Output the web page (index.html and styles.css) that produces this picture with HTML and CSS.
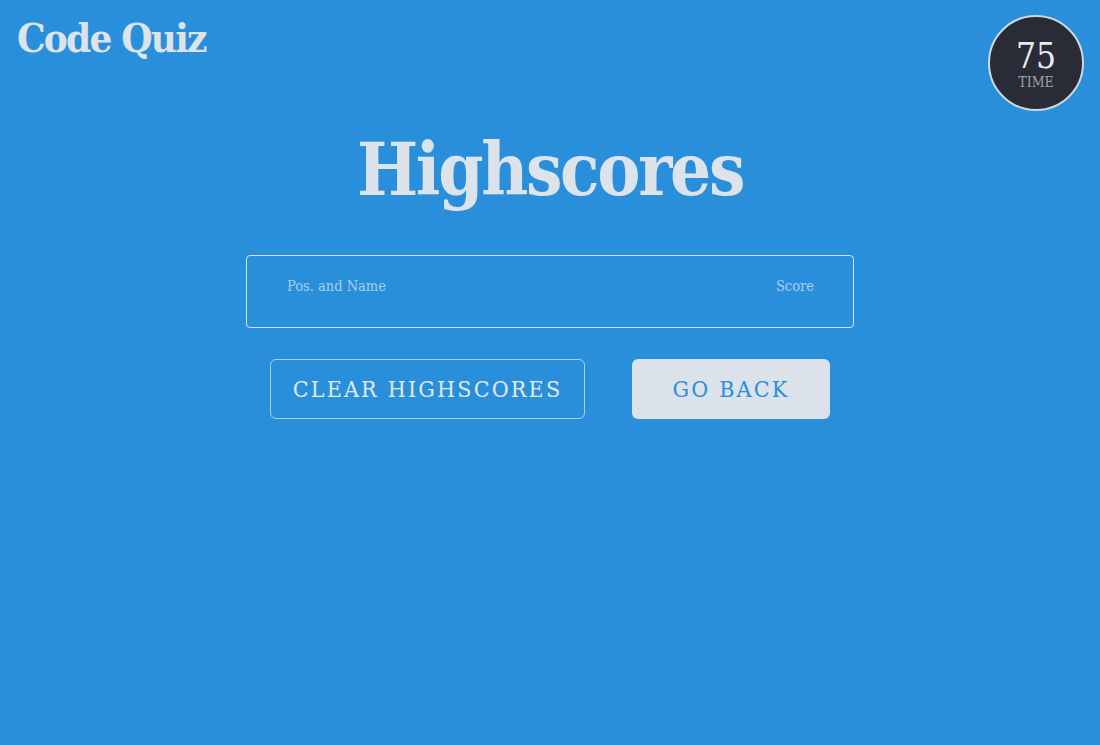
FILE: index.html
```html
<!DOCTYPE html>
<html lang="en">
<head>
<meta charset="utf-8">
<title>Code Quiz</title>
<link rel="stylesheet" href="styles.css">
</head>
<body>
<header class="top">
  <h1 class="brand">Code Quiz</h1>
  <div class="timer">
    <span class="timer-num">75</span>
    <span class="timer-label">TIME</span>
  </div>
</header>
<main class="main">
  <h2 class="title">Highscores</h2>
  <div class="table">
    <div class="table-head">
      <span>Pos. and Name</span>
      <span>Score</span>
    </div>
  </div>
  <div class="actions">
    <button class="btn btn-outline">CLEAR HIGHSCORES</button>
    <button class="btn btn-solid">GO BACK</button>
  </div>
</main>
</body>
</html>
```
FILE: styles.css
```css
html, body {
  margin: 0;
  padding: 0;
}
body {
  background: #2a8fda;
  color: #dce3ea;
  font-family: "Roboto Slab", "DejaVu Serif", "Liberation Serif", serif;
  font-stretch: condensed;
  height: 745px;
  overflow: hidden;
}
.top {
  position: relative;
  height: 120px;
}
.brand {
  margin: 0;
  padding: 12px 0 0 17px;
  font-size: 40px;
  font-weight: bold;
  line-height: 52px;
  letter-spacing: -1.8px;
}
.timer {
  position: absolute;
  top: 15px;
  right: 16px;
  width: 92px;
  height: 92px;
  border-radius: 50%;
  background: #292c37;
  border: 2px solid #cfd6de;
  display: flex;
  flex-direction: column;
  align-items: center;
  justify-content: center;
}
.timer-num {
  font-size: 35px;
  line-height: 36px;
  color: #e6ebf0;
  margin-top: 2px;
}
.timer-label {
  font-size: 14px;
  line-height: 16px;
  color: #9da2ab;
}
.main {
  display: flex;
  flex-direction: column;
  align-items: center;
}
.title {
  margin: 0;
  font-size: 72px;
  font-weight: bold;
  line-height: 100px;
  letter-spacing: -2.3px;
}
.table {
  margin-top: 35px;
  width: 606px;
  height: 71px;
  border: 1px solid #d6e4f2;
  border-radius: 4px;
}
.table-head {
  display: flex;
  justify-content: space-between;
  padding: 21px 39px 0 40px;
  font-size: 14.5px;
  color: #a8cdf0;
  line-height: 18px;
}
.actions {
  display: flex;
  gap: 47px;
  margin-top: 31px;
}
.btn {
  font-family: inherit;
  font-stretch: inherit;
  font-size: 23px;
  letter-spacing: 2.2px;
  height: 60px;
  border-radius: 6px;
  cursor: pointer;
  padding: 0;
}
.btn-outline {
  width: 315px;
  background: transparent;
  border: 1px solid #a9cff3;
  color: #e2e8ee;
}
.btn-solid {
  width: 198px;
  background: #dbe2e9;
  border: none;
  color: #2a8fda;
}
```
